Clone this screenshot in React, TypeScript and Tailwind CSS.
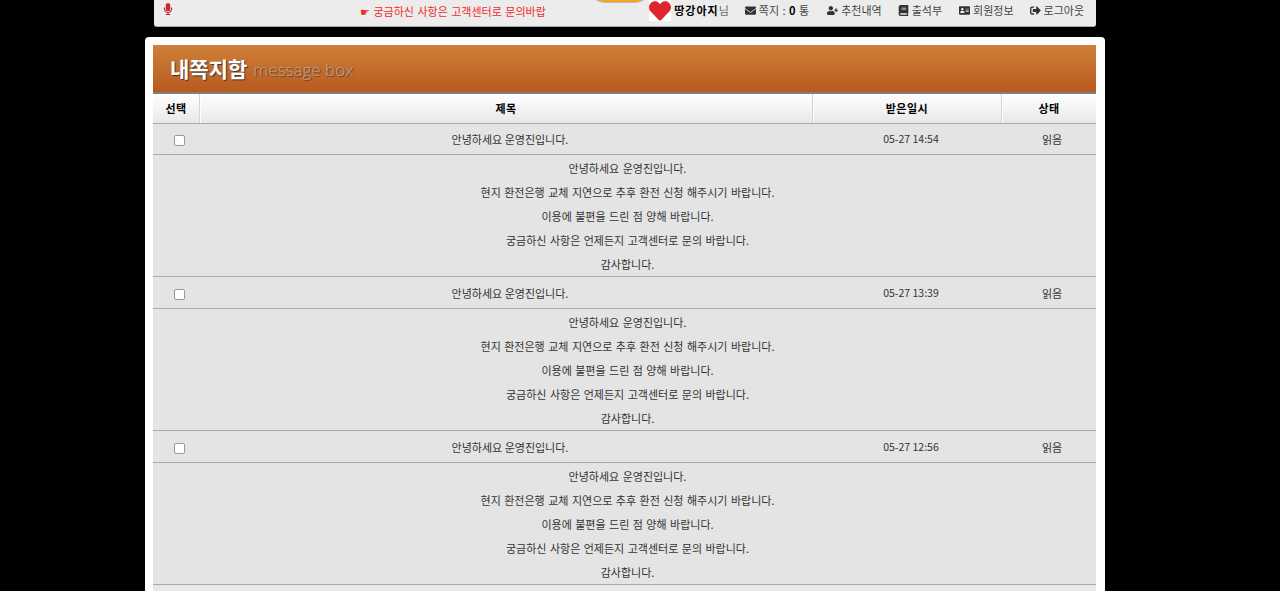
import React from "react";
import { FaMicrophone, FaEnvelope, FaUserPlus, FaBook, FaAddressCard, FaSignOutAlt, FaHeart } from "react-icons/fa";

const font = { fontFamily: '"Noto Sans CJK KR", "Liberation Sans", sans-serif' };

const lines = [
  "안녕하세요 운영진입니다.",
  "현지 환전은행 교체 지연으로 추후 환전 신청 해주시기 바랍니다.",
  "이용에 불편을 드린 점 양해 바랍니다.",
  "궁금하신 사항은 언제든지 고객센터로 문의 바랍니다.",
  "감사합니다.",
];

const rows = ["05-27 14:54", "05-27 13:39", "05-27 12:56"];

function Nav({ icon, children, cls = "" }: { icon: React.ReactNode; children: React.ReactNode; cls?: string }) {
  return (
    <span className={`flex items-center gap-[3px] text-[11px] text-[#444] ${cls}`}>
      <span className="text-[11px] text-[#333]">{icon}</span>
      {children}
    </span>
  );
}

function Head({ w, children }: { w: string; children: string }) {
  return (
    <div className={`${w} flex h-full items-center justify-center border-r border-[#d4d4d4] text-[11px] font-bold tracking-[0.5px] text-black shadow-[1px_0_0_#fff] last:border-r-0 last:shadow-none`}>
      {children}
    </div>
  );
}

export default function App() {
  return (
    <div className="h-[591px] w-[1280px] overflow-hidden bg-black" style={font}>
      <div className="relative ml-[154px] flex h-[27px] w-[942px] items-center justify-between rounded-b-[3px] border-b border-[#aaa] bg-[#ececec] pb-[5px] pl-[8px] pr-[12px]">
        <FaMicrophone className="-mt-[4px] text-[12px] text-[#c9282d]" />
        <span className="absolute left-[206px] top-[3px] text-[11px] text-[#f02a2a] [word-spacing:1px]">☛ 궁금하신 사항은 고객센터로 문의바랍</span>
        <span className="absolute left-[435px] top-[-13px] h-[16px] w-[62px] rounded-b-full border border-[#bbb] bg-[#f5a623]" />
        <div className="flex items-center gap-[16px]">
          <span className="flex items-center text-[11px] text-[#666]">
            <span className="mr-[3px] flex h-[21px] w-[22px] items-center justify-center bg-white text-[22px] text-[#e0252f]"><FaHeart /></span>
            <b className="tracking-[1px] text-black">땅강아지</b>님
          </span>
          <Nav icon={<FaEnvelope />}><span className="[word-spacing:1px]">쪽지 : <b className="text-black">0</b> 통</span></Nav>
          <Nav icon={<FaUserPlus />} cls="ml-[2px]">추천내역</Nav>
          <Nav icon={<FaBook />}>출석부</Nav>
          <Nav icon={<FaAddressCard />} cls="ml-[1px]">회원정보</Nav>
          <Nav icon={<FaSignOutAlt />}>로그아웃</Nav>
        </div>
      </div>

      <div className="ml-[145px] mt-[10px] h-[600px] w-[960px] rounded-[4px] bg-white pl-[8px] pr-[9px] pt-[8px]">
        <div className="flex h-[47px] items-center gap-[6px] bg-gradient-to-b from-[#cf8038] to-[#b85a20] pl-[17px]">
          <span className="text-[21px] font-bold text-white [text-shadow:1px_1px_1px_#333]">내쪽지함</span>
          <span className="mt-[3px] text-[17px] font-light text-[#b5a596] [text-shadow:1px_1px_1px_#6b3a18]" style={{ fontFamily: '"Open Sans", sans-serif' }}>message box</span>
        </div>
        <div className="flex h-[31px] border-t-2 border-[#808080] bg-gradient-to-b from-white to-[#e8e8e8]">
          <Head w="w-[47px]">선택</Head>
          <Head w="w-[613px]">제목</Head>
          <Head w="w-[189px]">받은일시</Head>
          <Head w="w-[94px]">상태</Head>
        </div>
        {rows.map((t, i) => (
          <div key={t} className="text-[11px] text-[#333]">
            <div className={i === 0 ? "flex h-[31px] items-center border-t border-[#aaa] bg-[#e4e4e4]" : "flex h-[32px] items-center border-t border-[#aaa] bg-[#e4e4e4] pt-[1px]"}>
              <div className="flex w-[47px] justify-center pl-[6px]">
                <span className="mt-[2px] h-[11px] w-[11px] rounded-[2px] border border-[#999] bg-white" />
              </div>
              <div className="w-[613px] pl-[7px] text-center">안녕하세요 운영진입니다.</div>
              <div className="w-[189px] pl-[7px] text-center text-[10.5px]">{t}</div>
              <div className="w-[94px] pl-[6px] text-center">읽음</div>
            </div>
            <div className="h-[122px] overflow-hidden border-t border-[#aaa] bg-[#e4e4e4] pl-[6px] pt-[1px] [word-spacing:1px]">
              {lines.map((l) => (
                <p key={l} className="h-[24px] text-center leading-[24px]">{l}</p>
              ))}
            </div>
          </div>
        ))}
        <div className="h-[32px] border-t border-[#aaa] bg-[#e8e8e8]" />
      </div>
    </div>
  );
}
